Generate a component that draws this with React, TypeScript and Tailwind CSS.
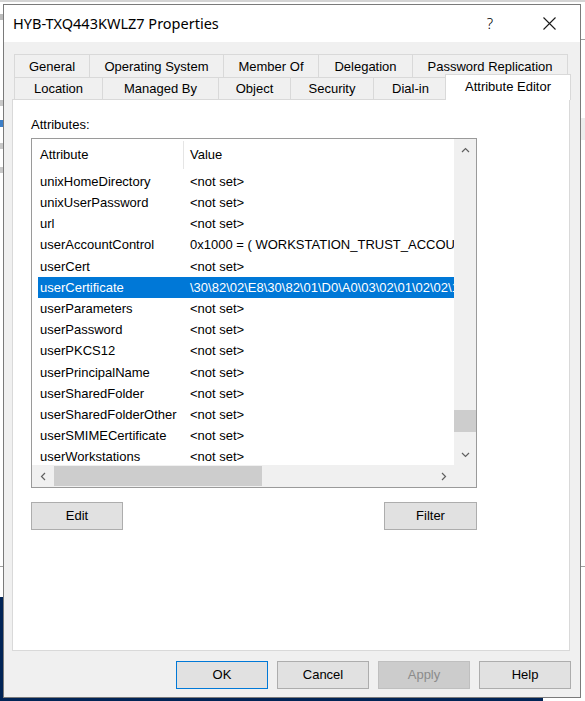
import React from "react";

const rows: [string, string][] = [
  ["unixHomeDirectory", "<not set>"],
  ["unixUserPassword", "<not set>"],
  ["url", "<not set>"],
  ["userAccountControl", "0x1000 = ( WORKSTATION_TRUST_ACCOUNT )"],
  ["userCert", "<not set>"],
  ["userCertificate", "\\30\\82\\02\\E8\\30\\82\\01\\D0\\A0\\03\\02\\01\\02\\02\\10\\1A\\4F"],
  ["userParameters", "<not set>"],
  ["userPassword", "<not set>"],
  ["userPKCS12", "<not set>"],
  ["userPrincipalName", "<not set>"],
  ["userSharedFolder", "<not set>"],
  ["userSharedFolderOther", "<not set>"],
  ["userSMIMECertificate", "<not set>"],
  ["userWorkstations", "<not set>"],
];

const topTabs: [string, string][] = [
  ["General", "w-[75px]"],
  ["Operating System", "w-[134px]"],
  ["Member Of", "w-[95px]"],
  ["Delegation", "w-[94px]"],
  ["Password Replication", "w-[156px]"],
];

const bottomTabs: [string, string][] = [
  ["Location", "w-[88px]"],
  ["Managed By", "w-[116px]"],
  ["Object", "w-[72px]"],
  ["Security", "w-[83px]"],
  ["Dial-in", "w-[74px]"],
];

function Chevron({ dir }: { dir: "up" | "down" | "left" | "right" }) {
  const pts = {
    up: "1,6 4.5,2.5 8,6",
    down: "1,3 4.5,6.5 8,3",
    left: "6,1 2.5,4.5 6,8",
    right: "3,1 6.5,4.5 3,8",
  }[dir];
  return (
    <svg width="9" height="9" viewBox="0 0 9 9">
      <polyline points={pts} fill="none" stroke="#606060" strokeWidth="1.2" />
    </svg>
  );
}

function WinButton({
  label,
  className = "",
  disabled,
  primary,
}: {
  label: string;
  className?: string;
  disabled?: boolean;
  primary?: boolean;
}) {
  return (
    <div
      className={
        "flex h-[28px] w-[92px] items-center justify-center border text-[13px] " +
        (disabled
          ? "border-[#bfbfbf] bg-[#cccccc] text-[#8b8b8b] "
          : primary
            ? "border-[#0078d7] bg-[#e1e1e1] text-black "
            : "border-[#adadad] bg-[#e1e1e1] text-black ") +
        className
      }
    >
      {label}
    </div>
  );
}

export default function App() {
  return (
    <div className="relative h-[701px] w-[585px] overflow-hidden bg-white font-['Liberation_Sans',Arial,sans-serif]">
      {/* desktop behind the dialog */}
      <div className="absolute left-0 top-0 h-[2px] w-[585px] bg-[#d4d4d4]" />
      <div className="absolute left-0 top-[14px] h-[6px] w-[3px] bg-[#bcbcbc]" />
      <div className="absolute left-0 top-[100px] h-[6px] w-[3px] bg-[#c8c8c8]" />
      <div className="absolute left-0 top-[120px] h-[7px] w-[3px] bg-[#3c7fc8]" />
      <div className="absolute left-0 top-[143px] h-[6px] w-[3px] bg-[#c8c8c8]" />
      <div className="absolute left-0 top-[167px] h-[6px] w-[3px] bg-[#c8c8c8]" />
      <div className="absolute left-0 top-[566px] h-[1px] w-[3px] bg-[#a0a0a0]" />
      <div className="absolute left-[581px] top-[39px] h-[1px] w-[4px] bg-[#a0a0a0]" />
      <div className="absolute left-[581px] top-[118px] h-[22px] w-[4px] bg-[#ececec]" />
      <div className="absolute left-[581px] top-[566px] h-[1px] w-[4px] bg-[#a0a0a0]" />
      <div className="absolute left-0 top-[597px] h-[104px] w-[543px] bg-[#012456]" />

      {/* dialog window */}
      <div className="absolute left-[3px] top-[4px] flex h-[694px] w-[578px] flex-col border border-[#7a7a7a] bg-[#f0f0f0]">
        <div className="flex h-[37px] shrink-0 items-center bg-white">
          <div className="ml-[9px] font-['Noto_Sans',sans-serif] text-[14.5px] text-black">
            HYB-TXQ443KWLZ7 Properties
          </div>
          <div className="ml-auto flex h-full w-[46px] items-center justify-center font-['Noto_Sans',sans-serif] text-[15px] font-light text-black">
            ?
          </div>
          <div className="ml-[13px] mr-[8px] flex h-full w-[46px] items-center justify-center">
            <svg width="13" height="13" viewBox="0 0 13 13">
              <path d="M0.5 0.5 L12.5 12.5 M12.5 0.5 L0.5 12.5" stroke="#1a1a1a" strokeWidth="1.1" />
            </svg>
          </div>
        </div>

        <div className="flex flex-1 flex-col pt-[12px]">
          {/* tabs */}
          <div className="ml-[10px] flex h-[23px] text-[13px] text-black">
            {topTabs.map(([t, w], i) => (
              <div
                key={t}
                className={
                  "flex items-center justify-center border-t border-l border-[#d9d9d9] pt-[1px] " +
                  w +
                  (i === topTabs.length - 1 ? " border-r" : "")
                }
              >
                {t}
              </div>
            ))}
          </div>
          <div className="ml-[10px] flex h-[22px] text-[13px] text-black">
            {bottomTabs.map(([t, w]) => (
              <div key={t} className={"flex items-center justify-center border-t border-l border-[#d9d9d9] " + w}>
                {t}
              </div>
            ))}
            <div className="relative z-10 -ml-[2px] -mt-[3px] flex h-[26px] w-[126px] items-center justify-center border-t border-l border-r border-[#d9d9d9] bg-white pb-[1px]">
              Attribute Editor
            </div>
          </div>

          {/* panel */}
          <div className="ml-[8px] flex h-[552px] w-[558px] flex-col border border-[#d9d9d9] bg-white pl-[18px]">
            <div className="mt-[17px] text-[13px] leading-[16px] text-black">Attributes:</div>
            <div className="mt-[5px] grid h-[350px] w-[446px] grid-cols-[1fr_22px] grid-rows-[1fr_22px] border border-[#9a9a9a] text-[13px] text-black">
              <div className="overflow-hidden">
                <div className="flex h-[32px] items-center">
                  <div className="w-[151px] pl-[8px]">Attribute</div>
                  <div className="h-[28px] w-px bg-[#e5e5e5]" />
                  <div className="pl-[6px]">Value</div>
                </div>
                {rows.map(([a, v]) => {
                  const sel = a === "userCertificate";
                  return (
                    <div
                      key={a}
                      className={
                        "ml-[6px] flex h-[21.2px] items-center whitespace-nowrap pl-[2px] " +
                        (sel ? "bg-[#0078d7] text-white" : "")
                      }
                    >
                      <div className="w-[150px] shrink-0">{a}</div>
                      <div>{v}</div>
                    </div>
                  );
                })}
              </div>
              <div className="flex flex-col bg-[#f0f0f0]">
                <div className="flex h-[22px] items-center justify-center">
                  <Chevron dir="up" />
                </div>
                <div className="flex flex-1 flex-col">
                  <div className="h-[249px]" />
                  <div className="h-[22px] bg-[#cdcdcd]" />
                </div>
                <div className="flex h-[22px] items-center justify-center">
                  <Chevron dir="down" />
                </div>
              </div>
              <div className="flex items-center bg-[#f0f0f0]">
                <div className="flex w-[22px] items-center justify-center">
                  <Chevron dir="left" />
                </div>
                <div className="h-[20px] w-[208px] bg-[#cdcdcd]" />
                <div className="ml-auto flex w-[22px] items-center justify-center">
                  <Chevron dir="right" />
                </div>
              </div>
              <div className="bg-[#f0f0f0]" />
            </div>
            <div className="mt-[14px] flex w-[446px] justify-between">
              <WinButton label="Edit" />
              <WinButton label="Filter" className="w-[93px]" />
            </div>
          </div>

          <div className="mr-[9px] mt-[10px] flex justify-end gap-[9px]">
            <WinButton label="OK" primary />
            <WinButton label="Cancel" />
            <WinButton label="Apply" disabled />
            <WinButton label="Help" />
          </div>
        </div>
      </div>
    </div>
  );
}
